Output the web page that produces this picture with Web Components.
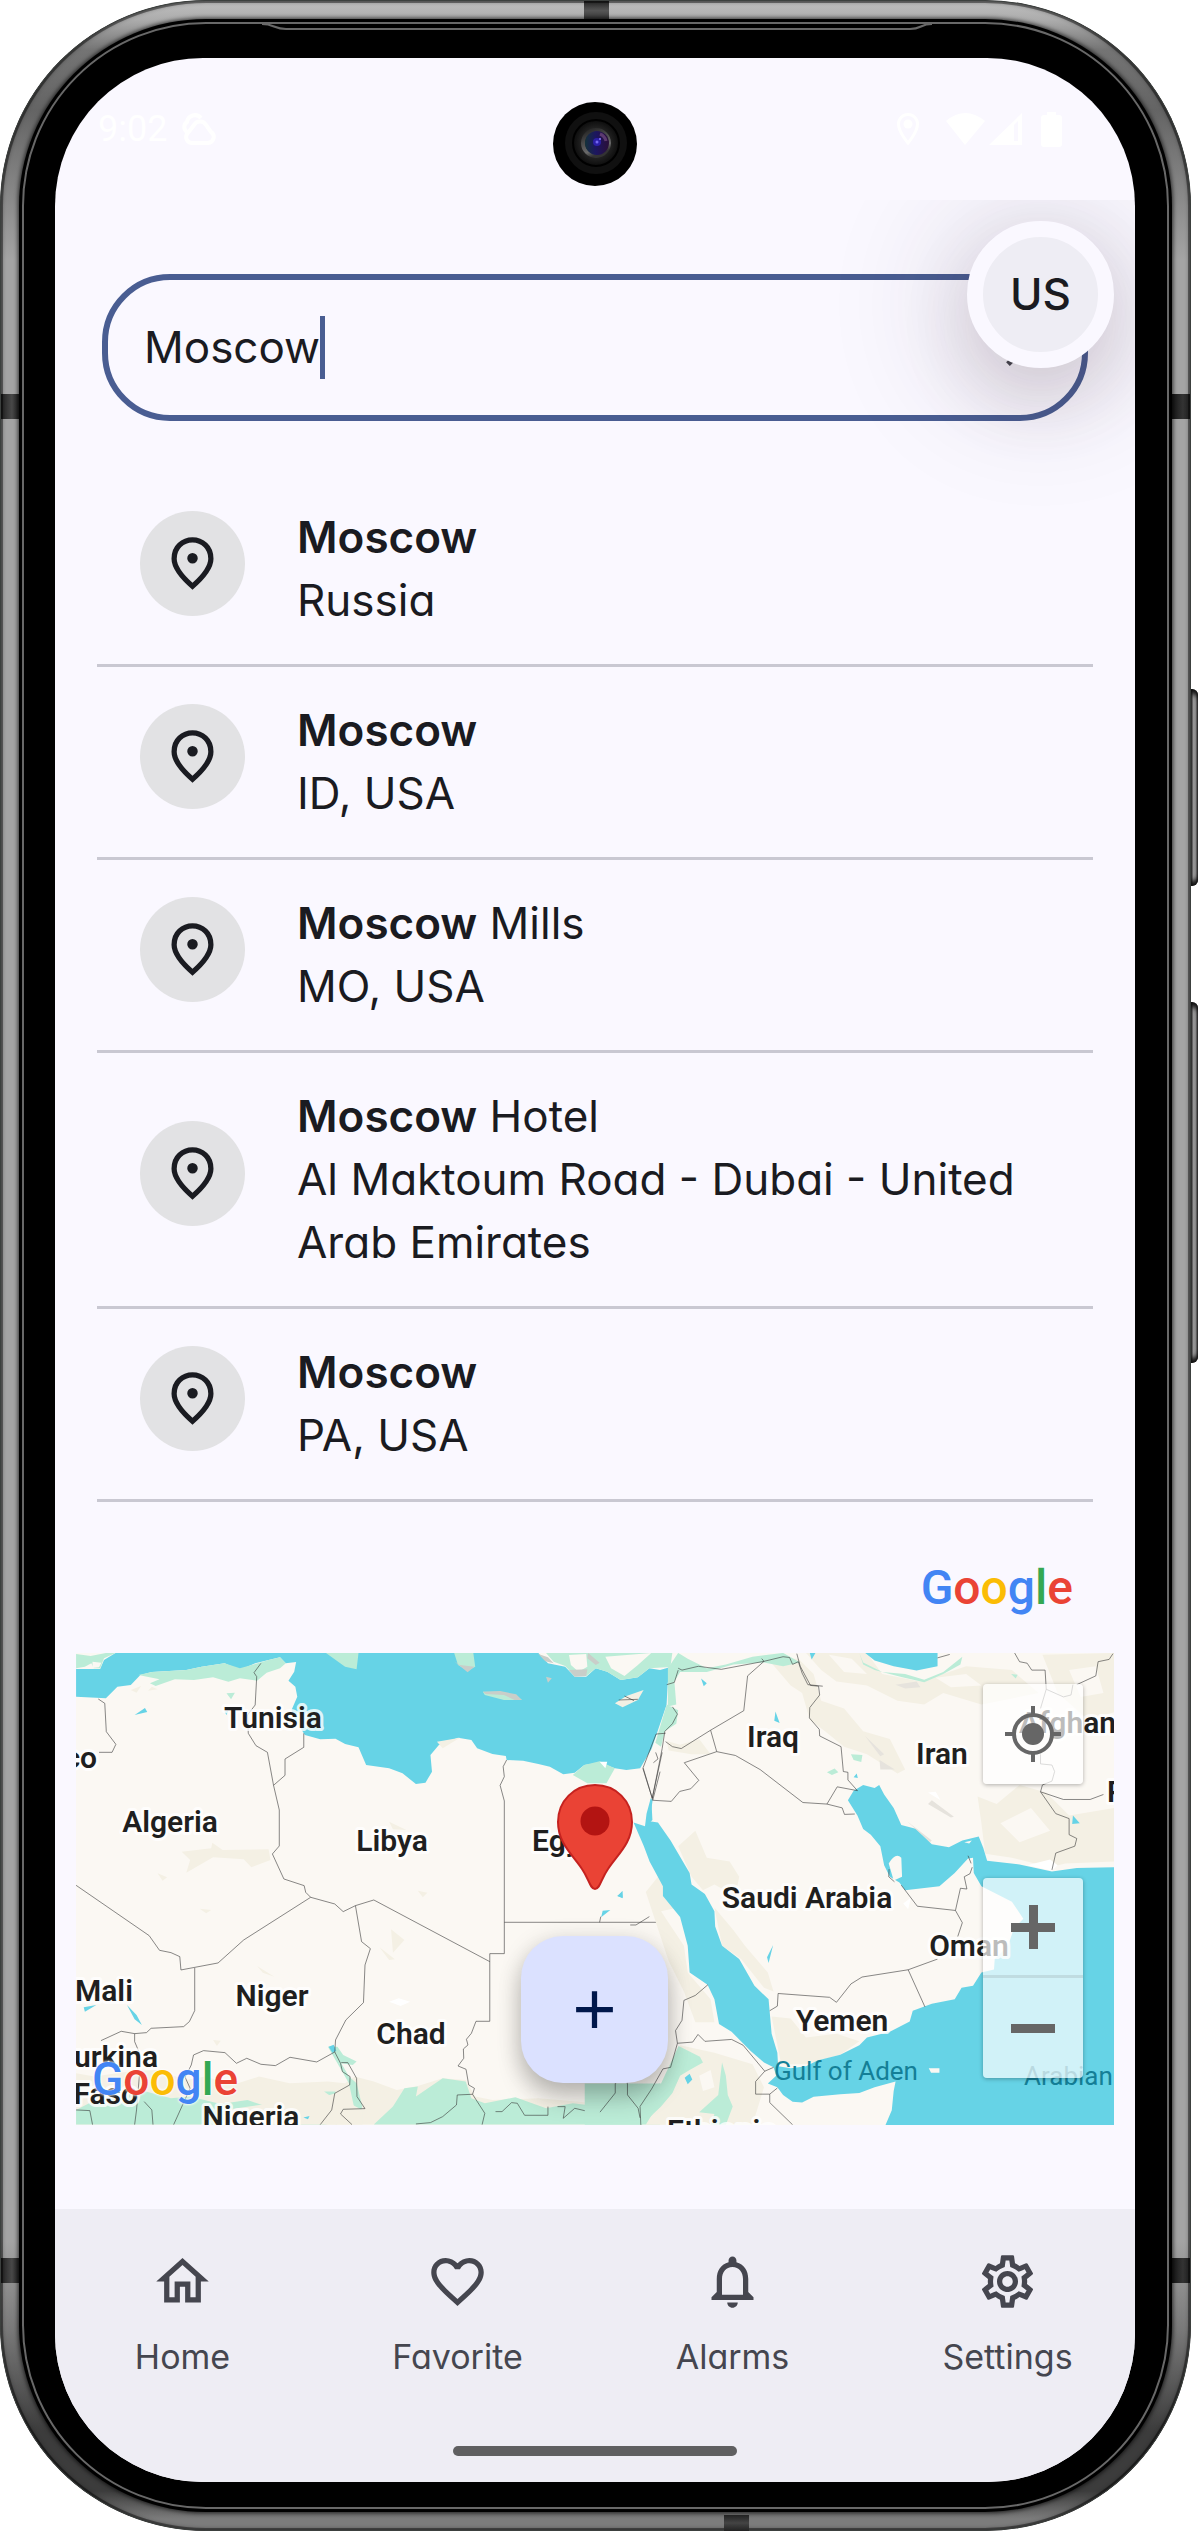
<!DOCTYPE html>
<html lang="en">
<head>
<meta charset="utf-8">
<meta name="viewport" content="width=device-width, initial-scale=1">
<title>Location search</title>
<style>
  body { margin: 0; background: #fff; font-family: Inter, "Noto Sans", sans-serif; font-feature-settings: "cv11"; color: #1a1b21; }
</style>
</head>
<body>
<phone-frame>
  <status-bar slot="status" time="9:02"></status-bar>
  <search-screen>
    <search-field value="Moscow"></search-field>
    <country-badge slot="badge">US</country-badge>
    <place-list>
      <place-row><b>Moscow</b><span slot="detail">Russia</span></place-row>
      <place-row><b>Moscow</b><span slot="detail">ID, USA</span></place-row>
      <place-row><b>Moscow</b> Mills<span slot="detail">MO, USA</span></place-row>
      <place-row><b>Moscow</b> Hotel<span slot="detail">Al Maktoum Road - Dubai - United Arab Emirates</span></place-row>
      <place-row><b>Moscow</b><span slot="detail">PA, USA</span></place-row>
    </place-list>
    <attribution-row><google-mark></google-mark></attribution-row>
    <map-view></map-view>
  </search-screen>
  <nav-bar slot="nav">
    <nav-item icon="home">Home</nav-item>
    <nav-item icon="heart">Favorite</nav-item>
    <nav-item icon="bell">Alarms</nav-item>
    <nav-item icon="gear">Settings</nav-item>
  </nav-bar>
</phone-frame>

<script>
const define = (name, render) => customElements.define(name, class extends HTMLElement {
  connectedCallback() {
    if (this.shadowRoot) return;
    this.attachShadow({ mode: "open" }).innerHTML = render(this);
  }
});

const ICONS = {
  home: "M12 5.69l5 4.5V18h-2v-6H9v6H7v-7.81l5-4.5M12 3L2 12h3v8h6v-6h2v6h6v-8h3L12 3z",
  heart: "M16.5 3c-1.74 0-3.41.81-4.5 2.09C10.91 3.81 9.24 3 7.5 3 4.42 3 2 5.42 2 8.5c0 3.78 3.4 6.86 8.55 11.54L12 21.35l1.45-1.32C18.6 15.36 22 12.28 22 8.5 22 5.42 19.58 3 16.5 3zm-4.4 15.55l-.1.1-.1-.1C7.14 14.24 4 11.39 4 8.5 4 6.5 5.5 5 7.5 5c1.54 0 3.04.99 3.57 2.36h1.87C13.46 5.99 14.96 5 16.5 5c2 0 3.5 1.5 3.5 3.5 0 2.89-3.14 5.74-7.9 10.05z",
  bell: "M12 22c1.1 0 2-.9 2-2h-4c0 1.1.89 2 2 2zm6-6v-5c0-3.07-1.64-5.64-4.5-6.32V4c0-.83-.67-1.5-1.5-1.5s-1.5.67-1.5 1.5v.68C7.63 5.36 6 7.92 6 11v5l-2 2v1h16v-1l-2-2zm-2 1H8v-6c0-2.48 1.51-4.5 4-4.5s4 2.02 4 4.5v6z",
  gear: "M19.43 12.98c.04-.32.07-.64.07-.98 0-.34-.03-.66-.07-.98l2.11-1.65c.19-.15.24-.42.12-.64l-2-3.46c-.09-.16-.26-.25-.44-.25-.06 0-.12.01-.17.03l-2.49 1c-.52-.4-1.08-.73-1.69-.98l-.38-2.65C14.46 2.18 14.25 2 14 2h-4c-.25 0-.46.18-.49.42l-.38 2.65c-.61.25-1.17.59-1.69.98l-2.49-1c-.06-.02-.12-.03-.18-.03-.17 0-.34.09-.43.25l-2 3.46c-.13.22-.07.49.12.64l2.11 1.65c-.04.32-.07.65-.07.98 0 .33.03.66.07.98l-2.11 1.65c-.19.15-.24.42-.12.64l2 3.46c.09.16.26.25.44.25.06 0 .12-.01.17-.03l2.49-1c.52.4 1.08.73 1.69.98l.38 2.65c.03.24.24.42.49.42h4c.25 0 .46-.18.49-.42l.38-2.65c.61-.25 1.17-.59 1.69-.98l2.49 1c.06.02.12.03.18.03.17 0 .34-.09.43-.25l2-3.46c.12-.22.07-.49-.12-.64l-2.11-1.65zm-1.98-1.71c.04.31.05.52.05.73 0 .21-.02.43-.05.73l-.14 1.13.89.7 1.08.84-.7 1.21-1.27-.51-1.04-.42-.9.68c-.43.32-.84.56-1.25.73l-1.06.43-.16 1.13-.2 1.35h-1.4l-.19-1.35-.16-1.13-1.06-.43c-.43-.18-.83-.41-1.23-.71l-.91-.7-1.06.43-1.27.51-.7-1.21 1.08-.84.89-.7-.14-1.13c-.03-.31-.05-.54-.05-.74s.02-.43.05-.73l.14-1.13-.89-.7-1.08-.84.7-1.21 1.27.51 1.04.42.9-.68c.43-.32.84-.56 1.25-.73l1.06-.43.16-1.13.2-1.35h1.39l.19 1.35.16 1.13 1.06.43c.43.18.83.41 1.23.71l.91.7 1.06-.43 1.27-.51.7 1.21-1.07.85-.89.7.14 1.13zM12 8c-2.21 0-4 1.79-4 4s1.79 4 4 4 4-1.79 4-4-1.79-4-4-4zm0 6c-1.1 0-2-.9-2-2s.9-2 2-2 2 .9 2 2-.9 2-2 2z"
};

/* Handset: metal band, antenna breaks, side keys, bezel, camera, rounded display */
define("phone-frame", () => `
<style>
  :host { display: block; position: relative; margin-right: 7px; }
  * { box-sizing: border-box; }
  .metal { padding: 22px; border-radius: 206px; overflow: hidden; position: relative;
    background: linear-gradient(180deg, #c0c0c0 0, #acacac 20px, #747474 50px, #646464 110px, #a4a4a4 260px, #a4a4a4 calc(100% - 290px), #787878 calc(100% - 200px), #3c3c3c calc(100% - 100px), #3c3c3c calc(100% - 40px), #7c7c7c calc(100% - 12px), #7c7c7c 100%); }
  .metal::after { content: ""; position: absolute; inset: 0; border-radius: inherit; pointer-events: none;
    box-shadow: inset 0 0 0 1px #3c403e, inset 0 0 0 3px rgba(0,0,0,.4), inset 0 0 4px 2px rgba(0,0,0,.4); }
  .bezel { position: relative; z-index: 1; background: #000; border: 2px solid #686868; border-radius: 184px; padding: 34px 32px 25px 31px;
    box-shadow: 0 0 0 3px #000, 0 0 4px 4px rgba(0,0,0,.7); }
  .lip { position: absolute; left: 0; right: 0; top: 0; width: 100%; height: 12px; z-index: 2; }
  .display { background: #faf8ff; border-radius: 148px; overflow: hidden; position: relative; }
  .band { position: absolute; background: #3a3a3a; }
  .side { width: 18px; height: 25px; }
  .l { left: 1px; background: linear-gradient(90deg, #222, #484848 60%, #222); }
  .r { right: 1px; background: linear-gradient(90deg, #161616, #333 60%, #222); }
  .upper { top: 394px; } .lower { bottom: 248px; }
  .top { top: 0; left: 584px; width: 25px; height: 21px; background: linear-gradient(#222, #555 50%, #333); }
  .bot { bottom: 0; left: 724px; width: 25px; height: 16px; background: linear-gradient(#222, #444 50%, #222); z-index: 3; }
  .key { position: absolute; left: 100%; width: 7px; border-radius: 0 6px 6px 0;
    background: linear-gradient(90deg, #222, #999 35%, #8c8c8c 65%, #222); box-shadow: inset 0 8px 5px -3px #111, inset 0 -8px 5px -3px #111; }
  .power { top: 689px; height: 197px; } .volume { top: 1002px; height: 361px; }
  .camera { position: absolute; top: 44px; left: 50%; margin-left: -42px; width: 84px; height: 84px; z-index: 4; }
</style>
<div class="metal">
  <i class="band side l upper"></i><i class="band side l lower"></i><i class="band side r upper"></i><i class="band side r lower"></i>
  <i class="band top"></i>
  <div class="bezel">
    <svg class="lip" viewBox="0 0 1143 12" preserveAspectRatio="none" aria-hidden="true">
      <path d="M240 -3H904C896 0 894 5 886 5H264C254 5 248 0 240 -3Z" fill="#000"/>
      <path d="M238 0C250 0 250 5 262 5H886C898 5 896 0 908 0" fill="none" stroke="#686868" stroke-width="2"/>
    </svg>
    <div class="display">
      <slot name="status"></slot><slot></slot><slot name="nav"></slot>
      <svg class="camera" viewBox="0 0 84 84" aria-hidden="true">
        <defs>
          <radialGradient id="ring"><stop offset=".6" stop-color="#242424"/><stop offset="1" stop-color="#0c0c0c"/></radialGradient>
          <linearGradient id="lens"><stop offset="0" stop-color="#14323a"/><stop offset=".45" stop-color="#1c1660"/><stop offset="1" stop-color="#2a0f38"/></linearGradient>
          <linearGradient id="glint" x1="0" y1="0" x2=".4" y2="1"><stop offset="0" stop-color="#222"/><stop offset=".8" stop-color="#6a6a6a"/><stop offset="1" stop-color="#333"/></linearGradient>
        </defs>
        <circle cx="42" cy="42" r="42" fill="#000"/><circle cx="43" cy="41" r="31" fill="#101010"/>
        <circle cx="43" cy="41" r="23" fill="url(#ring)" stroke="#000" stroke-width="2"/>
        <circle cx="43" cy="41" r="13" fill="none" stroke="url(#glint)" stroke-width="4"/>
        <circle cx="44" cy="41" r="12" fill="url(#lens)"/><path d="M47 32A10 10 0 0 1 53 39" fill="none" stroke="#5d3a70" stroke-width="3"/>
        <circle cx="44" cy="40" r="4" fill="#2c1fa8"/><circle cx="44" cy="40" r="1.500" fill="#7468f0"/><circle cx="47" cy="37" r="1" fill="#8a7cff"/>
      </svg>
    </div>
  </div>
  <i class="band bot"></i>
</div>
<i class="key power"></i><i class="key volume"></i>`);

define("status-bar", el => `
<style>
  :host { display: flex; align-items: center; height: 142px; box-sizing: border-box; padding: 0 73px 0 43px; gap: 15px; color: #fff; font: 400 36px/42px Roboto, sans-serif; }
  svg { display: block; fill: currentColor; } .fill { flex: 1; } .tray { display: flex; align-items: center; }
</style>
<time>${el.getAttribute("time")}</time>
<svg width="34" height="34" viewBox="0 0 34 34" aria-hidden="true"><g fill="none" stroke="currentColor" stroke-width="4"><path d="M10 31H26A6 6 0 0 0 29 20L24 13A7 7 0 0 0 12 13L5 22A6 6 0 0 0 10 31Z"/><path d="M5 20A6 6 0 0 1 5 10A8 8 0 0 1 19 6"/></g></svg>
<span class="fill"></span>
<span class="tray">
<svg width="24" height="34" viewBox="0 0 24 34" aria-hidden="true"><path d="M12 2.500A9.500 9.500 0 0 0 2.500 12C2.500 20 12 31 12 31S21.500 20 21.500 12A9.500 9.500 0 0 0 12 2.500Z" fill="none" stroke="currentColor" stroke-width="3"/><circle cx="12" cy="12" r="4.500"/></svg>
<svg width="66" height="34" viewBox="0 0 66 34" aria-hidden="true"><path d="M26 9Q45 -7 65 9L45 33Z"/></svg>
<svg width="36" height="34" viewBox="0 0 36 34" aria-hidden="true"><path fill-rule="evenodd" d="M3 33L36 1V33ZM28 13V29H32V9Z"/></svg>
<svg width="40" height="36" viewBox="0 0 40 36" aria-hidden="true"><path d="M19 4H25V1H34V4H37Q40 4 40 7V33Q40 36 37 36H22Q19 36 19 33V7Q19 4 22 4Z"/></svg>
</span>`);

define("search-screen", () => `
<style>
  :host { display: flex; flex-direction: column; position: relative; overflow: hidden; padding: 74px 0 84px; }
  .badge { position: absolute; top: 21px; right: 21px; }
</style>
<slot></slot><div class="badge"><slot name="badge"></slot></div>`);

define("search-field", el => `
<style>
  :host { display: block; margin: 0 47px; }
  label { display: flex; align-items: center; box-sizing: border-box; height: 147px; border: 6px solid #495d92; border-radius: 68px; padding: 0 26px 0 36px; }
  input { field-sizing: content; min-width: 0; max-width: 600px; border: 0; padding: 0; background: none; outline: none; font: inherit; font-size: 44px; line-height: 63px; font-feature-settings: inherit; color: inherit; }
  .caret { width: 5px; height: 63px; background: #495d92; }
  .fill { flex: 1; }
  button { border: 0; padding: 0; background: none; width: 63px; height: 63px; color: #45464f; }
  svg { display: block; width: 100%; }
</style>
<label><input type="text" aria-label="Search location" value="${el.getAttribute("value")}"><i class="caret"></i><i class="fill"></i>
<button type="button" aria-label="Clear"><svg viewBox="0 0 24 24"><path fill="currentColor" d="M19 6.410L17.590 5 12 10.590 6.410 5 5 6.410 10.590 12 5 17.590 6.410 19 12 13.410 17.590 19 19 17.590 13.410 12z"/></svg></button></label>`);

define("country-badge", () => `
<style>
  :host { display: block; }
  button { display: block; box-sizing: border-box; width: 147px; height: 147px; border: 16px solid #faf8ff; border-radius: 50%; padding: 0; background: #eeedf4; color: #1a1b21;
    font: inherit; font-size: 44px; font-weight: 500; line-height: 63px; box-shadow: 0 32px 72px rgba(70,35,50,.14), 0 10px 120px 30px rgba(50,35,60,.13); }
</style>
<button type="button"><slot></slot></button>`);

define("place-list", () => `
<style>:host { display: flex; flex-direction: column; margin: 53px 42px 0; }</style>
<div role="list"><slot></slot></div>`);

define("place-row", () => `
<style>
  :host { display: block; border-bottom: 3px solid #c9c8d2; }
  a { display: flex; align-items: center; gap: 52px; padding: 32px 30px 32px 43px; color: inherit; text-decoration: none; font-size: 44px; line-height: 63px; }
  .dot { flex: none; display: grid; place-items: center; width: 105px; height: 105px; margin-bottom: 12px; border-radius: 50%; background: #e2e2e4; }
  svg { width: 63px; height: 63px; } .text { display: flex; flex-direction: column; }
  ::slotted(b) { font-weight: 600; }
</style>
<a href="#place"><span class="dot"><svg viewBox="0 -960 960 960" aria-hidden="true"><path fill="currentColor" d="M480-480q33 0 56.500-23.500T560-560t-23.500-56.500T480-640t-56.500 23.500T400-560t23.500 56.500T480-480Zm0 294q122-112 181-203.500T720-552q0-109-69.500-178.500T480-800t-170.500 69.500T240-552q0 71 59 162.500T480-186Zm0 106Q319-217 239.500-334.500T160-552q0-150 96.500-239T480-880t223.500 89T800-552q0 100-79.500 217.500T480-80Z"/></svg></span>
<span class="text"><span><slot></slot></span><slot name="detail"></slot></span></a>`);

define("attribution-row", () => `
<style>:host { display: flex; justify-content: flex-end; align-items: center; box-sizing: border-box; height: 151px; padding: 20px 62px 0; }</style><slot></slot>`);

define("google-mark", () => `
<style>
  :host { display: block; font: 500 48px/56px Roboto, sans-serif; color: #4285f4; }
  .r { color: #ea4335; } .y { color: #fbbc05; } .g { color: #34a853; }
</style><span>G<span class="r">o</span><span class="y">o</span>g<span class="g">l</span><span class="r">e</span></span>`);

define("map-view", () => `
<style>
  :host { display: block; position: relative; margin: 0 21px; }
  .map { display: block; width: 100%; height: 472px; }
  .line path { fill: none; stroke: #3a3a3a; stroke-opacity: .6; stroke-width: 1px; vector-effect: non-scaling-stroke; }
  .sea { fill: #66d3e6; } .green { fill: #bbecd7; } .sand { fill: #f4f0e4; } .land { fill: #fbf8f3; } .hill { fill: #c9cec9; }
  text { font: 600 30px Roboto, sans-serif; fill: #1f1f20; paint-order: stroke; stroke: #fff; stroke-opacity: .8; stroke-width: 6px; stroke-linejoin: round; }
  .mid { text-anchor: middle; } .end { text-anchor: end; }
  .sealabel { font-size: 26px; font-weight: 400; fill: #147f97; stroke: none; }
  .mark { position: absolute; left: 16px; bottom: 18px; }
  google-mark { font-size: 46px; text-shadow: 0 0 3px #fff, 0 0 3px #fff; }
  .controls { position: absolute; top: 31px; right: 31px; bottom: 47px; display: flex; flex-direction: column; justify-content: space-between; }
  .stack { display: flex; flex-direction: column; box-shadow: 0 1px 4px rgba(0,0,0,.3); border-radius: 4px; }
  .controls button { width: 100px; height: 100px; padding: 0; border: 0; border-radius: 4px; background: rgba(255,255,255,.7); box-shadow: 0 1px 4px rgba(0,0,0,.3); }
  .stack button { box-shadow: none; } .stack button:first-child { border-bottom: 3px solid rgba(180,205,210,.6); border-radius: 4px 4px 0 0; } .stack button:last-child { border-radius: 0 0 4px 4px; }
  .controls svg { display: block; margin: auto; width: 64px; height: 64px; }
  .fab { position: absolute; left: 50%; bottom: 42px; margin-left: -74px; width: 147px; height: 147px; border: 0; padding: 0; border-radius: 42px; background: #dbe1ff; color: #00174b; box-shadow: 0 16px 24px rgba(0,0,0,.2), 0 4px 24px rgba(0,0,0,.14); }
  .fab svg { display: block; width: 63px; height: 63px; margin: auto; }
</style>
<svg class="map" viewBox="0 0 1038 472" preserveAspectRatio="xMidYMid slice" role="img" aria-label="Map">
  <rect class="land" width="1038" height="472"/>
  <g transform="matrix(.3827 0 0 .3333 -16 -13)">
    <path class="sea" d="M42 87L105 87 115 60 145 39H1250L1275 70 1320 80 1345 110 1375 110 1400 85 1430 95 1465 120 1510 112 1540 85 1568 90 1595 81 1588 130 1585 194 1575 228 1546 326 1516 385 1480 390 1450 385 1410 368 1370 375 1345 398 1315 403 1280 380 1250 372 1210 362 1167 360 1165 348 1130 342 1090 325 1075 300 1040 293 990 315 968 345 972 395 955 428 930 432 895 400 860 385 800 375 780 322 745 312 720 296 680 298 640 285 615 240 605 210 620 170 615 140 597 122 612 95 617 66 590 70 575 52 545 60 510 70 470 90 430 70 370 80 330 90 240 96 210 105 185 135 150 140 120 175 42 170Z"/>
    <path class="green" d="M42 42L80 48 120 39 145 39 115 55 105 85 88 85 82 70 65 80 42 85ZM205 105L240 96 330 90 370 80 430 70 470 85 510 72 545 60 575 52 590 70 575 85 540 98 515 122 470 115 440 125 400 112 350 120 300 118 250 138 235 130 260 118ZM695 39L745 80 775 88 780 39ZM1030 39L1040 75 1065 92 1085 80 1080 39ZM1105 155L1150 155 1190 165 1207 180 1160 180 1110 165ZM1340 405L1370 375 1410 364 1450 385 1440 405 1428 430 1378 430ZM1270 39L1290 65 1320 78 1345 108 1375 108 1400 85 1430 95 1465 120 1510 112 1540 85 1595 81 1600 39ZM435 160L457 158 447 178Z"/>
    <path class="land" d="M1330 45L1375 42 1378 80 1355 95 1335 75ZM1425 50L1545 39 1510 75 1475 108 1440 85ZM85 65L108 68 102 82 85 84Z"/>
    <path class="hill" d="M1105 155L1150 153 1192 163 1207 180 1188 180 1160 165 1112 162ZM1330 90L1378 88 1375 108 1345 110ZM1030 64L1045 75 1083 80 1065 97ZM1380 39L1410 68 1400 75 1378 55ZM1250 42L1275 52 1290 70 1268 64ZM1270 110L1285 115 1275 128Z"/>
    <path class="sand" d="M1450 190L1480 168 1525 150 1510 180 1470 202ZM318 635L395 625 398 608 425 630 545 628 550 660 500 682 480 658 400 652 365 675 330 698 340 660ZM255 700L280 712 268 722ZM365 806L395 810 382 820ZM835 922L875 958 860 960ZM865 868L900 900 870 938ZM515 978L560 1010 530 998ZM860 545L905 570 870 568ZM935 752L960 758 948 772ZM985 305L1045 293 1000 325ZM240 140L255 148 230 152ZM185 150L212 138 200 158ZM400 1200L420 1202 410 1218Z"/>
    <path class="sand" d="M42 1300L90 1310 180 1295 250 1290 330 1320 380 1310 450 1335 520 1310 600 1330 700 1325 745 1330 770 1310 820 1325 880 1350 935 1338 1000 1315 1060 1320 1085 1370 1130 1380 1250 1375 1400 1390 1568 1360V1454H42Z"/>
    <path class="green" d="M42 1410L85 1385 150 1375 210 1350 290 1375 340 1370 420 1392 490 1380 540 1400 600 1410 560 1430 700 1454H42ZM700 1220L725 1220 740 1245 775 1265 765 1275 735 1270 755 1310 775 1330 790 1400 780 1430 720 1454 770 1410 755 1330ZM820 1454L870 1400 900 1345 935 1340 930 1370 1000 1315 1060 1325 1075 1375 1110 1390 1190 1372 1270 1405 1340 1390 1410 1400 1568 1330V1454ZM690 1355L720 1355 715 1375Z"/>
    <path class="sand" d="M430 1410L520 1395 660 1380 720 1360 750 1345 740 1380 790 1410 790 1454H430Z"/>
    <path class="sea" d="M195 225L222 204 228 216ZM62 1102L95 1095 65 1115ZM175 1095L200 1125 214 1155 195 1138ZM702 1220L715 1214 722 1232 712 1238ZM1418 812L1438 810 1414 832ZM1457 768L1470 752 1470 775ZM1545 475L1548 540 1530 560ZM430 215L440 212 435 225ZM636 1433L652 1428 648 1438Z"/>
    <path fill="#fff" d="M860 1085L885 1075 915 1085 890 1098ZM1410 365L1430 365 1425 385Z"/>
    <g class="line">
      <path d="M100 177L117 190 121 275 146 313 136 337 102 337M525 70L507 98 514 110 510 195 490 225 492 280 512 317 542 337 558 436 573 510V618L555 642 585 717 638 737 642 757 655 772 718 792 740 815 772 797 820 780 1123 965M637 280V322L588 357V406L558 436M42 736L233 887 260 931 290 938 313 950 316 990 413 969 480 900 655 772M352 984V1112L338 1145 323 1160 238 1165 226 1178 195 1181 160 1174 107 1202M195 1181L195 1205 208 1240M772 797L788 905 811 926 797 975 793 1088 747 1140 720 1200 718 1236 671 1266 601 1252 563 1277 525 1273 488 1255 461 1270 431 1238 375 1232 349 1245 343 1275 327 1312 340 1345 297 1454M718 1236L733 1270 738 1295 758 1310 757 1335 718 1360 710 1410 680 1454M735 1268H752L775 1315 776 1370 797 1406 740 1408 733 1422 763 1454M1167 360L1158 380 1161 410 1150 436 1161 483V941H1123V1144H1087L1075 1180 1062 1198 1066 1215 1054 1227 1055 1255 1040 1278 1061 1288 1068 1335 1083 1345 1078 1363 1110 1420 1103 1454M1161 847H1560M1078 1363L1038 1365 1036 1395 1000 1430 968 1448 930 1452M1138 1415H1155L1180 1388 1195 1390 1214 1426H1275V1400M1300 1400H1320L1315 1435 1345 1405 1400 1420 1410 1418 1438 1390 1452 1360V1315M1482 1315V1355L1510 1390 1518 1454M1523 385L1549 480 1568 395M1490 855L1505 855 1540 830M1410 847L1413 830M42 1410L78 1412 85 1454M195 1454L200 1410 208 1300M220 1385L240 1410 243 1454M1460 180L1510 178M1475 168L1500 182"/>
    </g>
  </g>
  <g transform="matrix(.3814 0 0 .3827 524 -113)">
    <path class="sand" d="M440 310L520 310 560 350 580 420 640 440 690 500 760 520 800 600 780 610 700 560 640 540 590 500 550 470 530 400 500 380ZM540 295H700L740 350 840 370 960 330 1080 340 1150 400 1000 430 900 400 850 430 780 420 700 380 620 370 580 340ZM990 670L1040 690 1100 640 1170 660 1230 720 1348 700V840L1220 845 1180 855 1080 830 1010 820 1000 740ZM1160 300L1348 295V450L1280 470 1200 400ZM690 680L750 700 790 740 760 720ZM205 800L250 760 280 830 340 840 365 880 355 930 300 900 270 915 240 880ZM300 960L350 1020 380 1060 440 1130 455 1180 430 1170 370 1095 320 1060ZM160 870L205 960 160 970 220 1060 230 1130 290 1200 300 1260 250 1260 220 1180 180 1100 140 980 120 920ZM450 1245L500 1250 540 1300 620 1290 680 1310 630 1345 540 1370 475 1370ZM175 525L210 535 260 520 290 560 240 560 180 550ZM210 1320L300 1340 400 1370 430 1430 400 1528H120L180 1430Z"/>
    <path class="land" d="M600 300L660 310 700 350 640 345ZM880 360L960 350 1000 380 920 385ZM1050 740L1130 700 1180 760 1100 790ZM1230 340L1300 330 1320 400 1260 410ZM260 1400L290 1385 300 1430 270 1440Z"/>
    <path class="green" d="M178 335L205 295 230 310 280 335 330 325 400 305 480 295 525 320 480 330 430 320 350 325 280 345 210 345 195 370 200 430 178 435ZM680 295L690 320 740 345 800 350 850 365 900 345 950 305 945 325 900 350 850 372 790 358 720 340 690 325ZM175 430L205 445 200 480 170 500 160 540 145 530ZM595 607L615 597 625 607 608 614ZM658 560L688 562 685 580 665 575ZM206 1322L262 1350 270 1365 235 1385 210 1400 190 1445 160 1480 110 1528H-40V1420H160ZM320 1365L330 1400 335 1450 348 1480 330 1528 290 1528 300 1500 260 1495 310 1450ZM1078 350L1095 352 1090 362Z"/>
    <path class="sea" d="M88 738L118 748 122 715 133 675 138 680 130 735 152 738 185 785 235 870 240 900 275 925 300 970 302 1010 320 1060 365 1095 405 1165 442 1200 450 1290 465 1340 467 1375 500 1380 540 1375 570 1360 630 1345 680 1320 700 1300 760 1285 812 1258 820 1230 870 1212 930 1200 948 1170 978 1165 1000 1130 1033 1122 1035 1095 1070 1060 1085 1015 1110 990 1080 945 1040 925 1000 905 980 870 978 830 965 832 930 870 890 905 800 915 785 895 760 880 745 850 735 800 710 770 690 755 675 720 650 680 665 655 690 640 720 648 732 640 745 665 770 700 790 745 830 755 870 795 915 803 950 785 993 775 1005 805 1015 838 1100 848 1185 866 1250 857 1348 855V1530H748L765 1490 770 1440 775 1415 720 1430 680 1445 630 1448 560 1455 530 1470 505 1468 480 1450 465 1430 440 1420 462 1400 455 1378 430 1365 395 1335 345 1285 312 1265 300 1200 282 1162 235 1130 230 1060 210 985 165 930 165 905 130 840 115 800ZM695 295L720 315 770 330 830 341 885 330V295ZM265 362L280 374 272 382ZM460 448L471 478 457 472ZM438 1090L454 1058 442 1105ZM45 930L58 920 60 935ZM550 295H565L555 312ZM1240 720L1258 740 1238 742ZM222 1405L235 1395 242 1410 230 1422ZM665 620L673 610 676 622Z"/>
    <path class="land" d="M757 845Q775 815 790 830L792 880 770 890ZM862 1380H890V1392H868ZM955 790L975 785 968 793Z"/>
    <path fill="#fff" d="M860 660L880 658 893 680ZM795 950L815 935 808 965ZM1120 850L1180 835 1200 850 1185 864Z"/>
    <path fill="#e6e3dd" d="M695 512L745 560 735 565ZM733 575L773 600 735 600ZM775 378L830 370 840 385 800 388ZM870 680L928 723 920 725 860 690ZM805 735L870 785 865 790Z"/>
    <g class="line">
      <path d="M205 340L195 372 175 378M205 335L215 340 258 330 318 338 430 317 480 305 497 307 505 325 520 318 530 348 545 378 584 382M430 317L424 310M430 317L387 355 377 446 290 497 213 545 190 540 172 527M516 297L525 330 540 358 552 380 573 382 576 405 550 438 549 465 575 495 576 512 632 540 638 605 650 607V627L675 655 622 645 595 690 532 686 420 600 355 563 306 553 290 497M306 553L221 582 259 628 238 650 209 657 187 683 137 680M595 690L635 700 641 717 668 716M190 436L203 455 190 480 170 500 163 545 137 675 113 595 147 507 172 505M146 555L152 572 140 582M137 675L163 555M790 902L832 957 932 968 950 1000 938 1036M932 968L945 910 962 912 955 880 970 872 976 855M965 825L973 845M885 1095L808 1123 687 1142 658 1160 620 1208 602 1195 467 1185 465 1218 445 1230M808 1123L852 1220M758 860L757 880 772 893M1087 295L1100 318 1120 322 1132 340H1167L1170 390 1215 410 1235 405 1240 378M1250 378L1300 355 1306 318 1335 312 1345 297M1170 390L1155 440M1155 560V585L1185 588 1192 605 1185 630 1160 640 1155 658 1215 678H1285L1320 665M1155 658L1195 715 1230 728 1230 770 1250 780 1245 800 1195 818 1185 862M885 308L917 299M283 1162L250 1190 220 1203 215 1255 198 1282 203 1315 243 1312 257 1292 275 1310 345 1305 375 1320 432 1388 455 1378M432 1388L408 1415V1448H445L465 1432M203 1315L185 1378 165 1382 135 1435 105 1480 107 1528M40 1420V1445L0 1495M72 1420V1450L100 1485 105 1510M445 1448V1470L505 1528"/>
    </g>
  </g>
  <text class="end" x="21" y="115">co</text>
  <text class="mid" x="197" y="75">Tunisia</text>
  <text class="mid" x="94" y="179">Algeria</text>
  <text class="mid" x="316" y="198">Libya</text>
  <text x="456" y="198">Egypt</text>
  <text x="-1" y="348">Mali</text>
  <text class="mid" x="196" y="353">Niger</text>
  <text class="mid" x="335" y="391">Chad</text>
  <text class="end" x="82" y="414">urkina</text>
  <text class="end" x="62" y="451">Faso</text>
  <text class="mid" x="175" y="474">Nigeria</text>
  <text class="mid" x="697" y="94">Iraq</text>
  <text class="mid" x="866" y="111">Iran</text>
  <text x="943" y="80">Afghan</text>
  <text x="1031" y="149">P</text>
  <text class="mid" x="731" y="255">Saudi Arabia</text>
  <text class="mid" x="893" y="303">Oman</text>
  <text class="mid" x="766" y="378">Yemen</text>
  <text x="591" y="488">Ethiopia</text>
  <text class="sealabel mid" x="770" y="427">Gulf of Aden</text>
  <text class="sealabel" x="948" y="432">Arabian</text>
  <path d="M519 132C498 132 482 148 482 169C482 190 496 201 506 216C513 226 514 236 519 236S525 226 532 216C542 201 556 190 556 169C556 148 540 132 519 132Z" fill="#ea4335" stroke="#c5221f" stroke-width="2"/>
  <circle cx="519" cy="168" r="14.500" fill="#b31412"/>
</svg>
<div class="mark"><google-mark></google-mark></div>
<div class="controls">
  <button type="button" aria-label="My location"><svg viewBox="0 0 64 64"><g fill="none" stroke="#666" stroke-width="4"><circle cx="32" cy="32" r="19"/><path d="M32 4V13M32 51V60M4 32H13M51 32H60"/></g><circle cx="32" cy="32" r="11" fill="#666"/></svg></button>
  <div class="stack">
    <button type="button" aria-label="Zoom in"><svg viewBox="0 0 64 64"><path fill="#666" d="M28 10H37V28H54V37H37V54H28V37H10V28H28Z"/></svg></button>
    <button type="button" aria-label="Zoom out"><svg viewBox="0 0 64 64"><path fill="#666" d="M10 28H54V37H10Z"/></svg></button>
  </div>
</div>
<button type="button" class="fab" aria-label="Add"><svg viewBox="0 0 24 24"><path fill="currentColor" d="M19 13h-6v6h-2v-6H5v-2h6V5h2v6h6v2z"/></svg></button>`);

define("nav-bar", () => `
<style>
  :host { display: flex; flex-direction: column; align-items: stretch; justify-content: space-between; box-sizing: border-box; height: 273px; padding: 41px 0 26px; background: #eeedf4; color: #45464f; }
  nav { display: flex; gap: 20px; } ::slotted(*) { flex: 1 1 0; }
  .handle { align-self: center; width: 284px; height: 10px; border-radius: 5px; background: #5f5f60; }
</style>
<nav aria-label="Main"><slot></slot></nav><i class="handle"></i>`);

define("nav-item", el => `
<style>
  :host { display: block; }
  a { display: flex; flex-direction: column; align-items: center; gap: 23px; color: inherit; text-decoration: none; font-size: 34px; line-height: 42px; }
  svg { width: 63px; height: 63px; }
</style>
<a href="#${el.getAttribute("icon")}"><svg viewBox="0 0 24 24" aria-hidden="true"><path fill="currentColor" d="${ICONS[el.getAttribute("icon")]}"/></svg><slot></slot></a>`);
</script>
</body>
</html>
